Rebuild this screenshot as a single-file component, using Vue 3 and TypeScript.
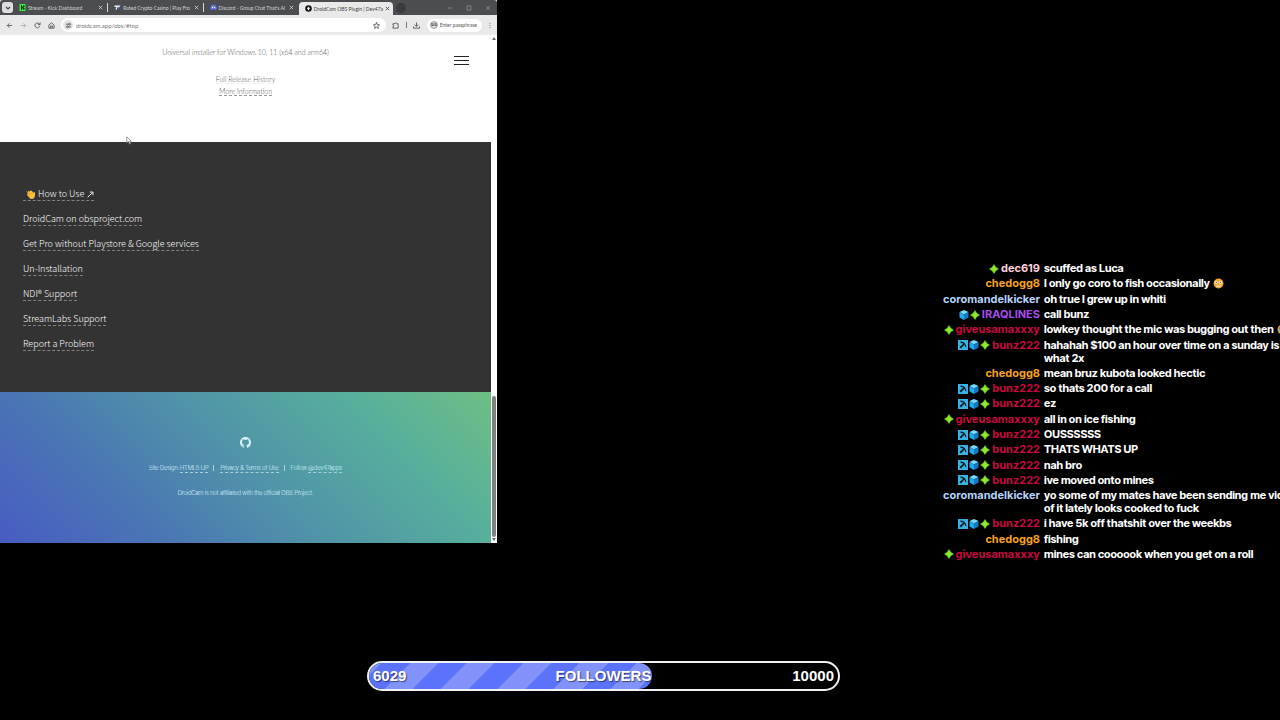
<script setup lang="ts">
interface Tab {
  title: string
  icon: 'kick' | 'casino' | 'discord' | 'droid'
  active?: boolean
}

interface ChatLine {
  user: string
  text: string
  badges: string[]
  color: string
  emoji?: 'flushed' | 'rofl'
}

const tabs: Tab[] = [
  { title: 'Stream - Kick Dashboard', icon: 'kick' },
  { title: 'Rated Crypto Casino | Play Fro', icon: 'casino' },
  { title: "Discord - Group Chat That's Al", icon: 'discord' },
  { title: 'DroidCam OBS Plugin | Dev47a', icon: 'droid', active: true },
]

const links: string[] = [
  'DroidCam on obsproject.com',
  'Get Pro without Playstore & Google services',
  'Un-Installation',
  'NDI® Support',
  'StreamLabs Support',
  'Report a Problem',
]

const bunz = { user: 'bunz222', badges: ['pick', 'cube', 'star'], color: 'crimson' }
const give = { user: 'giveusamaxxxy', badges: ['star'], color: 'crimson' }
const ched = { user: 'chedogg8', badges: [], color: 'orange' }
const coro = { user: 'coromandelkicker', badges: [], color: 'sky' }

const chat: ChatLine[] = [
  { user: 'dec619', badges: ['star'], color: 'pink', text: 'scuffed as Luca' },
  { ...ched, text: 'I only go coro to fish occasionally', emoji: 'flushed' },
  { ...coro, text: 'oh true I grew up in whiti' },
  { user: 'IRAQLINES', badges: ['cube', 'star'], color: 'purple', text: 'call bunz' },
  { ...give, text: 'lowkey thought the mic was bugging out then', emoji: 'rofl' },
  { ...bunz, text: 'hahahah $100 an hour over time on a sunday is what 2x' },
  { ...ched, text: 'mean bruz kubota looked hectic' },
  { ...bunz, text: 'so thats 200 for a call' },
  { ...bunz, text: 'ez' },
  { ...give, text: 'all in on ice fishing' },
  { ...bunz, text: 'OUSSSSSS' },
  { ...bunz, text: 'THATS WHATS UP' },
  { ...bunz, text: 'nah bro' },
  { ...bunz, text: 'ive moved onto mines' },
  { ...coro, text: 'yo some of my mates have been sending me vids of it lately looks cooked to fuck' },
  { ...bunz, text: 'i have 5k off thatshit over the weekbs' },
  { ...ched, text: 'fishing' },
  { ...give, text: 'mines can coooook when you get on a roll' },
]

const goal = { current: 6029, target: 10000 }
const goalWidth = `${(goal.current / goal.target) * 100}%`
</script>

<template>
  <div class="scene">
    <main class="stage">
      <section class="browser">
        <div class="titlebar">
          <button class="tab-search" aria-label="Search tabs">
            <svg viewBox="0 0 10 10"><path d="M3 4l2 2 2-2" fill="none" stroke="#444" stroke-width="1.2" /></svg>
          </button>
          <div class="tabs">
            <div v-for="tab in tabs" :key="tab.title" class="tab" :class="{ active: tab.active }">
              <svg v-if="tab.icon === 'kick'" class="favicon" viewBox="0 0 14 14">
                <path d="M1 0h12v14H1z" fill="#35f02a" />
                <path d="M4 2h2v3h2V3h3v3H9v2h2v3H8V9H6v3H4z" fill="#0b220a" />
              </svg>
              <svg v-else-if="tab.icon === 'casino'" class="favicon" viewBox="0 0 14 14">
                <path d="M1 3h12l-3 4H7l-2 5-2-2 2-4H1z" fill="#eef3ff" />
                <path d="M7 7h4l-2 3H6z" fill="#3559c9" />
              </svg>
              <svg v-else-if="tab.icon === 'discord'" class="favicon" viewBox="0 0 14 14">
                <path d="M3 2q4-1.500 8 0 3 4 2.500 8-1.500 2-3.500 2l-1-1.500H5L4 12q-2 0-3.500-2Q0 6 3 2z" fill="#6474f0" />
                <circle cx="5" cy="7" r="1.300" fill="#fff" />
                <circle cx="9" cy="7" r="1.300" fill="#fff" />
              </svg>
              <svg v-else class="favicon" viewBox="0 0 14 14">
                <circle cx="7" cy="7" r="6.500" fill="#111" />
                <path d="M7 3l3 4-3 4-3-4z" fill="#eee" />
              </svg>
              <span class="tab-title">{{ tab.title }}</span>
              <button class="tab-close" :aria-label="`Close ${tab.title}`">
                <svg viewBox="0 0 6 6"><path d="M1 1l4 4M5 1L1 5" stroke="currentColor" stroke-width="1" /></svg>
              </button>
            </div>
          </div>
          <button class="new-tab" aria-label="New tab"></button>
          <div class="window-controls">
            <button aria-label="Minimise"><svg viewBox="0 0 6 6"><path d="M1 3h4" /></svg></button>
            <button aria-label="Maximise"><svg viewBox="0 0 6 6"><path d="M1 1h4v4H1z" /></svg></button>
            <button aria-label="Close window"><svg viewBox="0 0 6 6"><path d="M1 1l4 4M5 1L1 5" /></svg></button>
          </div>
        </div>

        <div class="toolbar">
          <button class="tool" aria-label="Back"><svg viewBox="0 0 16 16"><path d="M14 8H3M8 3L3 8l5 5" /></svg></button>
          <button class="tool faint" aria-label="Forward"><svg viewBox="0 0 16 16"><path d="M2 8h11M8 3l5 5-5 5" /></svg></button>
          <button class="tool" aria-label="Reload"><svg viewBox="0 0 16 16"><path d="M13 9a5.500 5.500 0 1 1-1.500-5L14 6M14 1v5H9" /></svg></button>
          <button class="tool" aria-label="Home"><svg viewBox="0 0 16 16"><path d="M2 7l6-5 6 5v7H2zM6 14V9h4v5" /></svg></button>
          <div class="omnibox">
            <span class="site-info">
              <svg viewBox="0 0 16 16"><path d="M2 5h6M12 5h2M2 11h2M8 11h6M8 5a2 2 0 1 0 4 0 2 2 0 1 0-4 0M4 11a2 2 0 1 0 4 0 2 2 0 1 0-4 0" /></svg>
            </span>
            <input class="address" type="text" aria-label="Address" value="droidcam.app/obs/#top" />
            <button class="tool" aria-label="Bookmark"><svg viewBox="0 0 16 16"><path d="M8 1l2 5 5 .5-4 3.500 1.500 5L8 12l-4.500 3L5 10 1 6.500 6 6z" /></svg></button>
          </div>
          <div class="actions">
            <button class="tool" aria-label="Extensions"><svg viewBox="0 0 16 16"><path d="M2 4h4a2 2 0 0 1 4 0h4v10H2v-3a2 2 0 0 0 0-4z" /></svg></button>
            <span class="bar-line"></span>
            <button class="tool" aria-label="Downloads"><svg viewBox="0 0 16 16"><path d="M8 1v9M4 6l4 4 4-4M1 10v4h14v-4" /></svg></button>
            <button class="profile">
              <svg viewBox="0 0 16 16"><circle cx="8" cy="8" r="7" fill="#ddd" stroke="#555" /><path d="M2 6h12M3 9h4M9 9h4" stroke="#555" stroke-width="2" /></svg>
              <span>Enter passphrase</span>
            </button>
            <button class="tool narrow" aria-label="Menu"><svg viewBox="0 0 4 16"><path d="M2 2v2M2 7v2M2 12v2" /></svg></button>
          </div>
        </div>

        <div class="viewport">
          <div class="page">
            <section class="release">
              <p class="installer">Universal installer for Windows 10, 11 (x64 and arm64)</p>
              <p><a href="#history" class="faded">Full Release History</a></p>
              <p><a href="#more">More Information</a></p>
              <button class="burger" aria-label="Menu"><i></i><i></i><i></i></button>
              <svg class="cursor" viewBox="0 0 8 12"><path d="M1 1v8l2-2 2 4 1-1-1-3h2z" fill="#fff" stroke="#777" stroke-width="1" /></svg>
            </section>

            <nav class="guides">
              <a href="#howto" class="howto">
                <svg class="wave" viewBox="0 0 18 18">
                  <path d="M3 4l2-2 2 1 2-2 3 1 3 4 1-2 2 1v6l-2 5-4 2-4-1-6-7 1-2z" fill="#fbc040" />
                  <path d="M4 5l6 6M6 3l6 6M3 9l5 5" stroke="#d48a20" stroke-width="1" />
                  <path d="M0 5l2-4M15 17l3-2" stroke="#7da4c0" stroke-width="1" />
                </svg>
                <span>How to Use</span>
                <svg class="arrow" viewBox="0 0 10 10"><path d="M1 9l7-7M4 1.500h4.500V6" fill="none" stroke="#fff" stroke-width="1.300" /></svg>
              </a>
              <a v-for="link in links" :key="link" href="#guide">{{ link }}</a>
            </nav>

            <footer class="site-footer">
              <a href="#github" class="github" aria-label="GitHub">
                <svg viewBox="0 0 16 16"><path fill="#d9f4ff" d="M8 0C3.580 0 0 3.580 0 8c0 3.540 2.290 6.530 5.470 7.590.4.070.55-.17.55-.38 0-.19-.01-.82-.01-1.490-2.010.37-2.530-.49-2.690-.94-.09-.23-.48-.94-.82-1.130-.28-.15-.68-.52-.01-.53.63-.01 1.080.58 1.230.82.72 1.210 1.870.87 2.330.66.07-.52.28-.87.51-1.070-1.780-.2-3.640-.89-3.640-3.950 0-.87.31-1.590.82-2.150-.08-.2-.36-1.020.08-2.120 0 0 .67-.21 2.200.82.64-.18 1.320-.27 2-.27s1.360.09 2 .27c1.530-1.040 2.200-.82 2.200-.82.44 1.100.16 1.920.08 2.120.51.56.82 1.270.82 2.150 0 3.070-1.870 3.750-3.650 3.950.29.25.54.73.54 1.480 0 1.070-.01 1.930-.01 2.200 0 .21.15.46.55.38A8.010 8.010 0 0 0 16 8c0-4.420-3.580-8-8-8z" /></svg>
              </a>
              <ul class="credits">
                <li>Site Design: <a href="#design">HTML5 UP</a></li>
                <li><a href="#terms">Privacy &amp; Terms of Use</a></li>
                <li>Follow <a href="#follow">@dev47apps</a></li>
              </ul>
              <p class="disclaimer">DroidCam is not affiliated with the official OBS Project.</p>
            </footer>
          </div>
          <div class="scrollbar"><span class="up"></span><span class="thumb"></span><span class="down"></span></div>
        </div>
      </section>

      <section class="chat" aria-label="Chat">
        <div class="chat-list">
          <div v-for="(line, i) in chat" :key="i" class="line">
            <div class="who">
              <template v-for="badge in line.badges" :key="badge">
                <svg v-if="badge === 'pick'" class="badge" viewBox="0 0 20 20">
                  <path d="M0 0h20v20H0z" fill="#36b4e3" />
                  <path d="M5 3q10-1 12 12l-3-2-1-4-7 8-3-3 8-7-6-1z" fill="#07131e" />
                </svg>
                <svg v-else-if="badge === 'cube'" class="badge" viewBox="0 0 20 20">
                  <path d="M10 0l9 4-9 5-9-5z" fill="#75dcff" />
                  <path d="M1 4l9 5v11l-9-5z" fill="#23a9ed" />
                  <path d="M19 4l-9 5v11l9-5z" fill="#127cc0" />
                </svg>
                <svg v-else class="badge" viewBox="0 0 20 20">
                  <path d="M10 0q2 3 4 6l6 4-6 4q-2 3-4 6-2-3-4-6l-6-4 6-4q2-3 4-6z" fill="#62c91f" />
                  <path d="M10 3l3 4 4 3-4 3-3 4-3-4-4-3 4-3z" fill="#93e62f" />
                </svg>
              </template>
              <span class="name" :class="line.color">{{ line.user }}</span>
            </div>
            <div class="text">
              {{ line.text }}
              <svg v-if="line.emoji === 'flushed'" class="emoji" viewBox="0 0 20 20">
                <circle cx="10" cy="10" r="9" fill="#f4a52c" />
                <circle cx="6" cy="8" r="3" fill="#fff0d0" /><circle cx="14" cy="8" r="3" fill="#fff0d0" />
                <circle cx="6" cy="8" r="1" fill="#6b3d16" /><circle cx="14" cy="8" r="1" fill="#6b3d16" />
                <ellipse cx="10" cy="15" rx="5" ry="2" fill="#f6d3b0" />
              </svg>
              <svg v-if="line.emoji === 'rofl'" class="emoji" viewBox="0 0 20 20">
                <circle cx="10" cy="10" r="9" fill="#f4a52c" />
                <path d="M4 8l5-3M11 4l4 3" stroke="#5c3512" stroke-width="2" />
                <path d="M5 12l11-3q0 8-6 8-4-1-5-5z" fill="#8a2f1a" />
                <path d="M1 8l5 3-3 3z" fill="#4ba9e8" />
              </svg>
            </div>
          </div>
        </div>
      </section>
    </main>

    <div class="goal-row">
      <div class="goal" role="progressbar" aria-label="Followers" :aria-valuenow="goal.current" aria-valuemin="0" :aria-valuemax="goal.target">
        <div class="goal-fill" :style="{ width: goalWidth }"></div>
        <div class="goal-labels">
          <span>{{ goal.current }}</span>
          <span>FOLLOWERS</span>
          <span class="end">{{ goal.target }}</span>
        </div>
      </div>
    </div>
  </div>
</template>

<style>
body {
  background: #000;
}
</style>

<style scoped>
.scene {
  box-sizing: border-box;
  min-height: 100vh;
  padding-bottom: 29px;
  display: flex;
  flex-direction: column;
  gap: 100px;
  background: #000;
  overflow: hidden;
}
button {
  padding: 0;
  border: 0;
  background: none;
  color: inherit;
  font: inherit;
  display: flex;
  align-items: center;
  justify-content: center;
}
svg {
  display: block;
}
.stage {
  flex: 1;
  display: grid;
  grid-template-columns: minmax(0, 497fr) minmax(0, 443fr) minmax(0, 340fr);
}

/* Browser window */
.browser {
  align-self: start;
  font-family: Lato, "Liberation Sans", sans-serif;
  font-size: 5px;
  background: #e9e9e9;
}
.titlebar {
  height: 15px;
  display: flex;
  align-items: center;
  padding: 0 6px 0 2px;
  background: #4b4d50;
  border-radius: 3px 3px 0 0;
  color: #d5d6d8;
}
.tab-search {
  width: 11px;
  height: 11px;
  border-radius: 3px;
  background: #dedede;
}
.tab-search svg {
  width: 10px;
}
.tabs {
  flex: 0 1 380px;
  min-width: 0;
  align-self: stretch;
  display: flex;
  padding-top: 2px;
}
.tab {
  flex: 1;
  min-width: 0;
  display: flex;
  align-items: center;
  gap: 2px;
  padding: 0 4px 0 6px;
  border-right: 1px solid #d5d6d8;
}
.tab:not(.active) {
  height: 9px;
  margin-top: 1px;
}
.tab:nth-last-child(2) {
  border-color: transparent;
}
.tab.active {
  border: 0;
  border-radius: 4px 4px 0 0;
  background: #e9e9e9;
  color: #444;
}
.favicon {
  flex: none;
  width: 7px;
  height: 7px;
}
.tab-title {
  flex: 1;
  white-space: nowrap;
}
.tab-close,
.tab-close svg {
  width: 5px;
  height: 5px;
}
.new-tab {
  width: 10px;
  height: 10px;
  margin-left: 3px;
  border-radius: 50%;
  background: #3a3b3e;
}
.window-controls {
  margin-left: auto;
  display: flex;
  gap: 13px;
}
.window-controls svg {
  width: 6px;
  height: 6px;
  fill: none;
  stroke: #808284;
  stroke-width: 1;
}
.toolbar {
  height: 20px;
  display: flex;
  align-items: center;
  gap: 6px;
  padding: 0 5px;
  background: #e9e9e9;
}
.tool {
  flex: none;
  width: 8px;
  height: 8px;
}
.tool svg,
.site-info svg {
  width: 7px;
  height: 7px;
  fill: none;
  stroke: #555;
  stroke-width: 2;
}
.tool.faint svg {
  stroke: #aaa;
}
.tool.narrow {
  width: 4px;
}
.tool.narrow svg {
  width: 2px;
}
.omnibox {
  flex: 1;
  min-width: 0;
  height: 14px;
  display: flex;
  align-items: center;
  gap: 3px;
  padding: 0 5px 0 2px;
  border-radius: 7px;
  background: #fff;
}
.site-info {
  width: 10px;
  height: 10px;
  border-radius: 50%;
  background: #e4e4e4;
  display: grid;
  place-items: center;
}
.address {
  flex: 1;
  min-width: 0;
  padding: 0;
  border: 0;
  outline: 0;
  background: none;
  color: #777;
  font: 6px Lato, sans-serif;
}
.actions {
  display: flex;
  align-items: center;
  gap: 6px;
}
.bar-line {
  width: 1px;
  height: 6px;
  background: #777;
}
.profile {
  height: 13px;
  padding: 0 5px 0 3px;
  gap: 2px;
  border-radius: 7px;
  background: #fff;
  color: #555;
  white-space: nowrap;
}
.profile svg {
  width: 8px;
  height: 8px;
}

/* Web page */
.viewport {
  display: flex;
  background: #fff;
}
.page {
  flex: 1;
  min-width: 0;
  font-weight: 300;
}
.page a {
  color: inherit;
  text-decoration: none;
  border-bottom: 1px dashed currentColor;
}
.page p {
  margin: 0;
}
.release {
  position: relative;
  box-sizing: border-box;
  min-height: 107px;
  padding-top: 11px;
  text-align: center;
  font-size: 7px;
  line-height: 12px;
  color: #555;
  background: #fff;
}
.release .installer {
  margin-bottom: 15px;
}
.release a {
  border-color: #999;
}
.release .faded {
  border-color: #eee;
}
.burger {
  position: absolute;
  top: 21px;
  right: 22px;
  width: 15px;
  height: 9px;
  flex-direction: column;
  justify-content: space-between;
}
.burger i {
  width: 15px;
  height: 1px;
  background: #222;
}
.cursor {
  position: absolute;
  left: 126px;
  top: 101px;
  width: 6px;
  height: 9px;
}
.guides {
  display: flex;
  flex-direction: column;
  align-items: flex-start;
  gap: 12px;
  padding: 46px 23px 41px;
  background: #333;
  color: #fff;
  font-family: "Noto Sans CJK SC", "Noto Sans", sans-serif;
  font-size: 9px;
  line-height: 12px;
}
.howto {
  display: flex;
  align-items: center;
  gap: 3px;
  padding-left: 3px;
}
.guides a {
  border-color: #808080;
}
.wave {
  width: 9px;
  height: 9px;
}
.arrow {
  width: 7px;
  height: 7px;
}
.site-footer {
  box-sizing: border-box;
  min-height: 151px;
  padding-top: 45px;
  display: flex;
  flex-direction: column;
  align-items: center;
  font-family: "Inter Display", Lato, sans-serif;
  font-size: 6px;
  line-height: 8px;
  color: #d9f4ff;
  background: linear-gradient(45deg, #485cc2 0%, #4a75b4 25%, #5093a8 50%, #57b09b 78%, #6fbe84 100%);
}
.page .github {
  border: 0;
}
.site-footer a {
  border-color: #a3cfd8;
}
.github svg {
  width: 11px;
  height: 11px;
}
.credits {
  list-style: none;
  margin: 16px 0;
  padding: 0;
  display: flex;
  align-items: center;
}
.credits li {
  display: flex;
  gap: 1px;
}
.credits li + li::before {
  content: "";
  width: 1px;
  height: 6px;
  margin: 1px 5px 0 5px;
  background: #a9d3dc;
}
.scrollbar {
  width: 6px;
  display: flex;
  flex-direction: column;
  align-items: center;
  padding: 2px 0;
  box-sizing: border-box;
  background: #fff;
}
.up,
.down {
  border: 2px solid transparent;
}
.up {
  border-top: 0;
  border-bottom: 3px solid #666;
}
.down {
  border-bottom: 0;
  border-top: 3px solid #666;
}
.thumb {
  width: 4px;
  height: 28%;
  margin: auto 0 1px;
  border-radius: 2px;
  background: #808080;
}

/* Chat overlay */
.chat {
  grid-column: 3;
  align-self: end;
}
.chat-list {
  width: calc(100% + 12px);
  min-height: 41.5vh;
  display: flex;
  flex-direction: column;
  justify-content: space-between;
  font-family: Inter, "Liberation Sans", sans-serif;
  font-size: 11px;
  font-weight: 700;
  line-height: 13px;
}
.line {
  display: grid;
  grid-template-columns: 100px minmax(0, 1fr);
  gap: 4px;
}
.who {
  height: 13px;
  display: flex;
  justify-content: flex-end;
  align-items: center;
  gap: 1px;
}
.badge {
  flex: none;
  width: 10px;
  height: 10px;
}
.name {
  margin-left: 1px;
}
.text {
  color: #fff;
  font-family: "Inter Tight", Inter, sans-serif;
}
.emoji {
  display: inline-block;
  width: 11px;
  height: 11px;
  margin-left: 1px;
  vertical-align: -2px;
}
.pink { color: #ffd0dc; }
.orange { color: #f5a122; }
.sky { color: #b5d4fb; }
.purple { color: #a64dee; }
.crimson { color: #c8093f; }

/* Follower goal */
.goal-row {
  display: grid;
  grid-template-columns: 367fr 473fr 440fr;
}
.goal {
  grid-column: 2;
  box-sizing: border-box;
  display: grid;
  height: 30px;
  border: 2px solid #f2f2f2;
  border-radius: 15px;
  overflow: hidden;
}
.goal-fill,
.goal-labels {
  grid-area: 1 / 1;
}
.goal-fill {
  border-radius: 0 13px 13px 0;
  background: repeating-linear-gradient(135deg, #8292fb 0 9px, #5b73fa 9px 29px, #8292fb 29px 40px);
}
.goal-labels {
  display: grid;
  grid-template-columns: 1fr auto 1fr;
  align-items: center;
  padding: 0 4px;
  color: #fff;
  font: 700 15px/26px "Liberation Sans", Arial, sans-serif;
  text-shadow: 1px 1px 1px #0008;
}
.end {
  text-align: right;
}
</style>
